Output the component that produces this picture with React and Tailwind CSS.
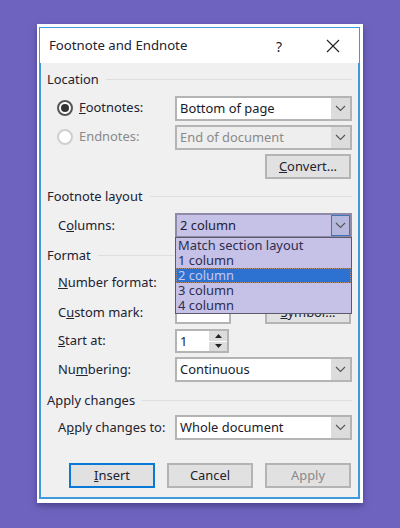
import React from 'react';

const font = { fontFamily: '"Noto Sans", "Open Sans", sans-serif' };

const Chevron = ({ color = '#555' }) => (
    <svg width="11" height="7" viewBox="0 0 11 7" fill="none">
        <path d="M1 1l4.5 4.5L10 1" stroke={color} strokeWidth="1.1" />
    </svg>
);

const Caret = ({ up }) => (
    <svg width="7" height="4" viewBox="0 0 7 4">
        <path d={up ? 'M3.5 0L7 4H0z' : 'M0 0h7L3.5 4z'} fill="#222" />
    </svg>
);

const Combo = ({ value, disabled }) => (
    <div className={`flex h-[25px] w-[177px] border-2 border-[#b4b4b4] ${disabled ? 'bg-[#eeeeee] text-[#8a8a8a]' : 'bg-white text-[#1a1a2a]'}`}>
        <span className="flex-1 pl-[3px] leading-[20px]">{value}</span>
        <span className="flex w-[19px] items-center justify-center bg-[#dcdcdc]"><Chevron /></span>
    </div>
);

const Btn = ({ children, primary, short, muted }) => (
    <div className={`flex w-[86px] items-center justify-center border-2 bg-[#e1e1e1] ${short ? 'h-[23px]' : 'h-[25px]'} ${primary ? 'border-[#0a78d7]' : 'border-[#b4b4b4]'} ${muted ? 'text-[#8a8a8a]' : ''}`}>
        {children}
    </div>
);

const Group = ({ title }) => (
    <div className="flex h-[16px] items-center gap-[7px]">
        <span className="leading-[16px]">{title}</span>
        <span className="h-px flex-1 bg-[#dfdfdf]" />
    </div>
);

const Row = ({ label, className = '', children }) => (
    <div className={`flex items-center justify-between pl-[11px] ${className}`}>
        <span>{label}</span>
        {children}
    </div>
);

const App = () => (
    <div className="h-[528px] w-[400px] overflow-hidden bg-[#6e64bf] pl-[37px] pt-[24px] text-[12.9px] text-[#222230]" style={font}>
        <div className="h-[479px] w-[326px] bg-white pb-[4px] pl-[2px] pr-[3px] pt-[3px] shadow-[0_3px_6px_rgba(40,30,90,0.5)]">
            <div className="relative h-[472px] w-[321px] border-2 border-[#3c9bd8] bg-[#f0f0f0]">
                <div className="-mx-px -mt-px flex h-[35px] items-center justify-between bg-white pl-[9px] pr-[19px] pt-[1px] text-[13.2px]">
                    <span>Footnote and Endnote</span>
                    <div className="flex items-center gap-[44px]">
                        <span className="text-[14px]">?</span>
                        <svg width="14" height="14" viewBox="0 0 14 14" fill="none">
                            <path d="M1 1l12 12M13 1L1 13" stroke="#222" strokeWidth="1.1" />
                        </svg>
                    </div>
                </div>

                <div className="pl-[6px] pr-[6px] pt-[8px]">
                    <Group title="Location" />
                    <div className="mt-[9px] flex items-center justify-between pl-[10px]">
                        <div className="flex items-center gap-[6px]">
                            <span className="flex h-[16px] w-[16px] items-center justify-center rounded-full border-2 border-[#555] bg-white">
                                <span className="h-[8px] w-[8px] rounded-full bg-[#333]" />
                            </span>
                            <span className="-mt-px"><u>F</u>ootnotes:</span>
                        </div>
                        <Combo value="Bottom of page" />
                    </div>
                    <div className="mt-[4px] flex items-center justify-between pl-[10px] text-[#8a8a8a]">
                        <div className="flex items-center gap-[6px]">
                            <span className="h-[16px] w-[16px] rounded-full border-2 border-[#cfcfcf] bg-white" />
                            <span className="-mt-px">Endnotes:</span>
                        </div>
                        <Combo value="End of document" disabled />
                    </div>
                    <div className="mt-[4px] flex justify-end pr-px">
                        <Btn><span><u>C</u>onvert...</span></Btn>
                    </div>

                    <div className="mt-[9px]"><Group title="Footnote layout" /></div>
                    <Row label={<>C<u>o</u>lumns:</>} className="mt-[9px]">
                        <div className="flex h-[25px] w-[177px] border-2 border-[#8f8aa8] bg-[#c6c1e6]">
                            <span className="flex-1 pl-[3px] leading-[20px]">2 column</span>
                            <span className="flex w-[19px] items-center justify-center border border-[#3f73b8] bg-[#b7b8dd]"><Chevron /></span>
                        </div>
                    </Row>

                    <div className="mt-[9px]"><Group title="Format" /></div>
                    <Row label={<><u>N</u>umber format:</>} className="mt-[7px] h-[25px]" />
                    <Row label={<>C<u>u</u>stom mark:</>} className="mt-[6px]">
                        <div className="flex w-[177px] justify-between pr-px">
                            <div className="h-[23px] w-[56px] border-2 border-[#b4b4b4] bg-white" />
                            <Btn short><span><u>S</u>ymbol...</span></Btn>
                        </div>
                    </Row>
                    <Row label={<><u>S</u>tart at:</>} className="mt-[5px]">
                        <div className="flex w-[177px]">
                            <div className="flex h-[24px] w-[54px] border-2 border-[#b4b4b4] bg-white">
                                <span className="flex-1 pl-[3px] leading-[20px]">1</span>
                                <div className="flex w-[18px] flex-col gap-px">
                                    <span className="flex flex-1 items-center justify-center bg-[#dcdcdc]"><Caret up /></span>
                                    <span className="flex flex-1 items-center justify-center bg-[#dcdcdc]"><Caret /></span>
                                </div>
                            </div>
                        </div>
                    </Row>
                    <Row label={<>Nu<u>m</u>bering:</>} className="mt-[4px]">
                        <Combo value="Continuous" />
                    </Row>

                    <div className="mt-[10px]"><Group title="Apply changes" /></div>
                    <Row label={<>A<u>p</u>ply changes to:</>} className="mt-[7px]">
                        <Combo value="Whole document" />
                    </Row>

                    <div className="mt-[23px] flex justify-end gap-[12px] pr-px">
                        <Btn primary><span><u>I</u>nsert</span></Btn>
                        <Btn>Cancel</Btn>
                        <Btn muted>Apply</Btn>
                    </div>
                </div>

                {/* open dropdown lies over the format rows */}
                <div className="absolute left-[134px] top-[208px] w-[177px] border border-[#5a5a6a] bg-[#c6c1e6] leading-[15px] text-[#2e2e50]">
                    <div className="h-[15px] pl-[2px]">Match section layout</div>
                    <div className="h-[15px] pl-[2px]">1 column</div>
                    <div className="h-[15px] border border-dotted border-[#b08a6a] bg-[#2d72d0] pl-[1px] leading-[13px] text-[#c8c8ee]">2 column</div>
                    <div className="h-[15px] pl-[2px]">3 column</div>
                    <div className="h-[15px] pl-[2px]">4 column</div>
                </div>
            </div>
        </div>
    </div>
);

export default App;
